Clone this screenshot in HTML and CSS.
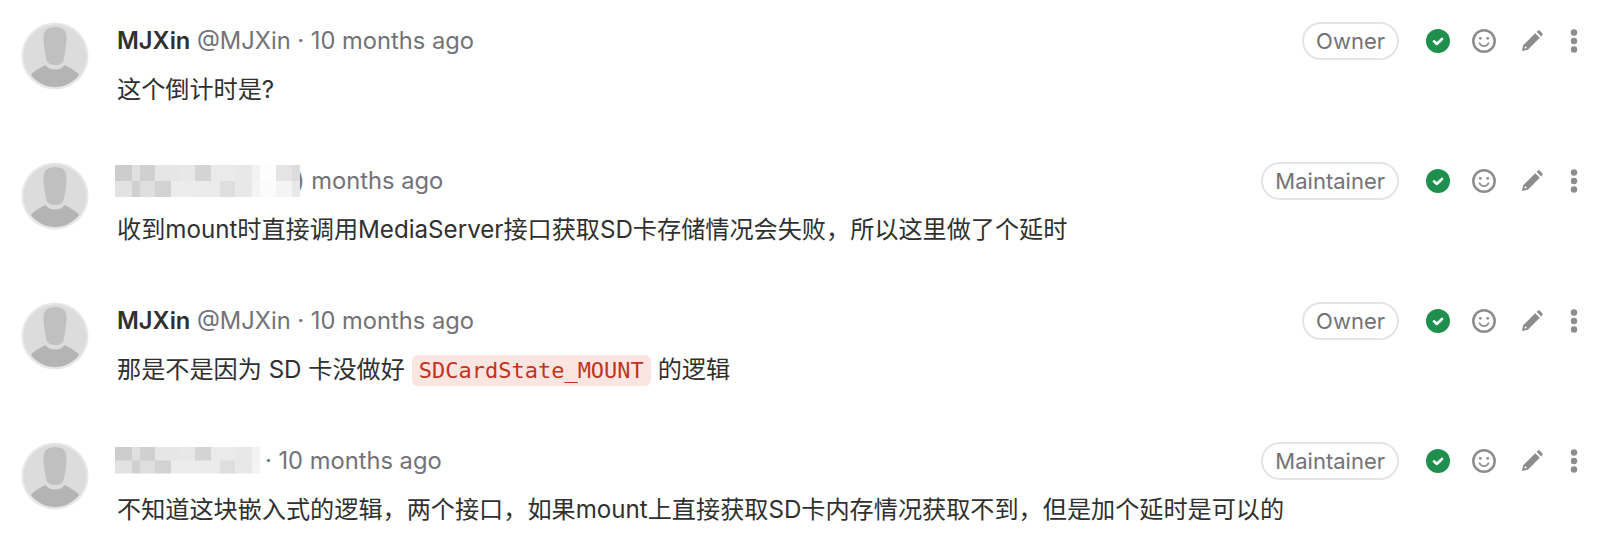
FILE: index.html
```html
<!DOCTYPE html>
<html lang="en">
<head>
<meta charset="UTF-8" />
<meta name="viewport" content="width=device-width, initial-scale=1" />
<title>Discussion</title>
<link rel="stylesheet" href="styles.css">
</head>
<body>

<svg class="sprite" width="0" height="0">
  <symbol id="avatar" viewBox="0 0 68 68">
    <circle cx="34" cy="34" r="33.500" fill="#e8e8e8" />
    <circle cx="34" cy="34" r="31.500" fill="#dcdcdc" />
    <path d="M34 5c-7.500 0-11.500 3.500-11.500 10 0 8 1.500 17 3 23 1 3.500 4 5 8.500 5s7.500-1.500 8.500-5c1.500-6 3-15 3-23 0-6.500-4-10-11.500-10z" fill="#c0c0c0" />
    <path d="M10 53c2-3 8-7 14.500-10 2 3 5 4.500 9.500 4.500s7.500-1.500 9.500-4.500c6.500 3 12.500 7 14.500 10-6 7.500-14.500 12-24 12s-18-4.500-24-12z" fill="#b4b4b4" />
  </symbol>
  <symbol id="check" viewBox="0 0 24 24">
    <circle cx="12" cy="12" r="12" fill="#1f8f4e" />
    <path d="M8 12.300l2.800 2.700 5.200-5" fill="none" stroke="#fff" stroke-width="2.600" stroke-linecap="round" stroke-linejoin="round" />
  </symbol>
  <symbol id="smile" viewBox="0 0 24 24">
    <circle cx="12" cy="12" r="10.700" fill="none" stroke="#8c8c8c" stroke-width="2.500" />
    <circle cx="8.300" cy="9.300" r="1.400" fill="#8c8c8c" />
    <circle cx="15.700" cy="9.300" r="1.400" fill="#8c8c8c" />
    <path d="M7.500 14.200c1 2 2.700 3 4.500 3s3.500-1 4.500-3" fill="none" stroke="#8c8c8c" stroke-width="1.700" stroke-linecap="round" />
  </symbol>
  <symbol id="pencil" viewBox="0 0 24 24">
    <path d="M1 23l1.500-6.500L15.500 3.500l5 5L7.500 21.500z" fill="#8c8c8c" />
    <path d="M17 2l1.800-1.500c.5-.4 1-.4 1.500 0l3.200 3.200c.4.500.4 1 0 1.500L22 7z" fill="#8c8c8c" />
    <path d="M3.800 20.200l.7-2.800 2.100 2.100z" fill="#fff" />
  </symbol>
  <symbol id="dots" viewBox="0 0 8 24">
    <circle cx="4" cy="3.500" r="3.200" fill="#8c8c8c" />
    <circle cx="4" cy="12" r="3.200" fill="#8c8c8c" />
    <circle cx="4" cy="20.500" r="3.200" fill="#8c8c8c" />
  </symbol>
</svg>

<div class="notes">

  <div class="note">
    <svg class="avatar"><use href="#avatar" /></svg>
    <div class="note-main">
      <div class="note-head">
        <div class="note-meta"><b>MJXin</b> @MJXin · 10 months ago</div>
        <span class="role">Owner</span>
        <div class="note-actions">
          <svg class="ic-check"><use href="#check" /></svg>
          <svg class="ic-smile"><use href="#smile" /></svg>
          <svg class="ic-pencil"><use href="#pencil" /></svg>
          <svg class="ic-dots"><use href="#dots" /></svg>
        </div>
      </div>
      <p class="note-text">这个倒计时是?</p>
    </div>
  </div>

  <div class="note">
    <svg class="avatar"><use href="#avatar" /></svg>
    <div class="note-main">
      <div class="note-head">
        <div class="note-meta"><span class="mosaic mosaic-long"></span><span class="meta-cut">) months ago</span></div>
        <span class="role">Maintainer</span>
        <div class="note-actions">
          <svg class="ic-check"><use href="#check" /></svg>
          <svg class="ic-smile"><use href="#smile" /></svg>
          <svg class="ic-pencil"><use href="#pencil" /></svg>
          <svg class="ic-dots"><use href="#dots" /></svg>
        </div>
      </div>
      <p class="note-text">收到mount时直接调用MediaServer接口获取SD卡存储情况会失败，所以这里做了个延时</p>
    </div>
  </div>

  <div class="note">
    <svg class="avatar"><use href="#avatar" /></svg>
    <div class="note-main">
      <div class="note-head">
        <div class="note-meta"><b>MJXin</b> @MJXin · 10 months ago</div>
        <span class="role">Owner</span>
        <div class="note-actions">
          <svg class="ic-check"><use href="#check" /></svg>
          <svg class="ic-smile"><use href="#smile" /></svg>
          <svg class="ic-pencil"><use href="#pencil" /></svg>
          <svg class="ic-dots"><use href="#dots" /></svg>
        </div>
      </div>
      <p class="note-text">那是不是因为 SD 卡没做好 <code>SDCardState_MOUNT</code> 的逻辑</p>
    </div>
  </div>

  <div class="note">
    <svg class="avatar"><use href="#avatar" /></svg>
    <div class="note-main">
      <div class="note-head">
        <div class="note-meta"><span class="mosaic mosaic-short"></span><span class="meta-after">· 10 months ago</span></div>
        <span class="role">Maintainer</span>
        <div class="note-actions">
          <svg class="ic-check"><use href="#check" /></svg>
          <svg class="ic-smile"><use href="#smile" /></svg>
          <svg class="ic-pencil"><use href="#pencil" /></svg>
          <svg class="ic-dots"><use href="#dots" /></svg>
        </div>
      </div>
      <p class="note-text">不知道这块嵌入式的逻辑，两个接口，如果mount上直接获取SD卡内存情况获取不到，但是加个延时是可以的</p>
    </div>
  </div>

</div>

</body>
</html>
```

FILE: styles.css
```css
body {
  margin: 0;
  background: #fff;
  font-family: Inter, "Noto Sans CJK SC", sans-serif;
  color: #303030;
}
.sprite {
  position: absolute;
}
.notes {
  padding: 22px 30px 0 21px;
}
.note {
  display: flex;
  height: 140px;
}
.note:last-child {
  height: auto;
}
.avatar {
  width: 68px;
  height: 68px;
  flex-shrink: 0;
}
.note-main {
  flex: 1;
  margin-left: 28px;
}
.note-head {
  display: flex;
  align-items: center;
  height: 38px;
}
.note-meta {
  flex: 1;
  display: flex;
  align-items: center;
  padding-bottom: 2px;
  font-size: 23.700px;
  color: #737278;
  white-space: pre;
}
.note-meta b {
  font-weight: 600;
  color: #303030;
}
/* covers the end of the text after it, like the blurred name in the original */
.mosaic {
  display: block;
  position: relative;
  z-index: 1;
  height: 32px;
  margin: 2px 0 0 -2px;
  background:
    linear-gradient(90deg, #cdcdcd 17px, #e0e0e0 17px 25px, #d0d0d0 25px 40px, #e6e6e6 40px 65px, #e8e8e8 65px 80px, #d4d4d4 80px 96px, #eaeaea 96px 120px, #e8e8e8 120px 137px, #f2f2f2 137px 145px, #fdfdfd 145px 161px, #e4e4e4 161px 177px, #dcdcdc 177px) top / 100% 50% no-repeat,
    linear-gradient(90deg, #e2e2e2 17px, #d0d0d0 17px 25px, #dedede 25px 40px, #d2d2d2 40px 56px, #ececec 56px 80px, #ebebeb 80px 105px, #dedede 105px 120px, #e8e8e8 120px 137px, #f4f4f4 137px 145px, #fbfbfb 145px 161px, #f4f4f4 161px 177px, #e8e8e8 177px) bottom / 100% 50% no-repeat;
}
.mosaic-long {
  width: 185px;
}
.mosaic-short {
  width: 145px;
  height: 27px;
  margin-top: 0;
}
.meta-cut {
  margin-left: -4px;
}
.meta-after {
  margin-left: 5px;
}
.role {
  height: 38px;
  box-sizing: border-box;
  border: 2px solid #e4e4e4;
  border-radius: 19px;
  padding: 0 12px;
  font-size: 22px;
  line-height: 35px;
  color: #737278;
}
.note-actions {
  display: flex;
  align-items: center;
  margin-left: 27px;
}
.ic-check,
.ic-smile {
  width: 24px;
  height: 24px;
}
.ic-smile {
  margin-left: 22px;
}
.ic-pencil {
  width: 22px;
  height: 22px;
  margin-left: 25px;
}
.ic-dots {
  width: 8px;
  height: 24px;
  margin-left: 27px;
}
.note-text {
  margin: 13px 0 0;
  font-size: 24.150px;
  line-height: 34px;
}
code {
  font-family: "DejaVu Sans Mono", monospace;
  font-size: 22px;
  color: #c0341d;
  background: #fbe5e1;
  border-radius: 6px;
  padding: 3px 7px;
  margin: 0;
}
```
